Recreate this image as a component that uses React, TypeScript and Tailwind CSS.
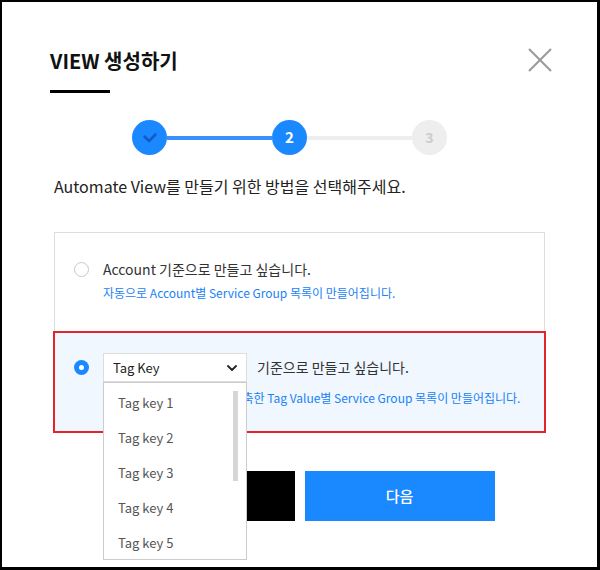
import { useState } from "react";

const font = { fontFamily: '"Noto Sans CJK KR", "Noto Sans", sans-serif' };

const tagKeys = ["Tag key 1", "Tag key 2", "Tag key 3", "Tag key 4", "Tag key 5", "Tag key 6"];

function Stepper() {
  return (
    <div className="ml-[78px] mt-[27px] flex items-center">
      <div className="w-[35px] h-[35px] rounded-full bg-[#1a88ff] flex items-center justify-center">
        <svg width="18" height="18" viewBox="0 0 18 18" fill="none">
          <path d="M3.5 7.5 L8 12 L14.5 5.5" stroke="#1559c4" strokeWidth="2.5" strokeLinecap="round" strokeLinejoin="round" />
        </svg>
      </div>
      <div className="w-[105px] h-[4px] bg-[#3b8fff]" />
      <div className="w-[35px] h-[35px] rounded-full bg-[#1a88ff] flex items-center justify-center text-white text-[15px] font-bold">
        2
      </div>
      <div className="w-[105px] h-[4px] bg-[#eeeeee]" />
      <div className="w-[35px] h-[35px] rounded-full bg-[#eeeeee] flex items-center justify-center text-[#cccccc] text-[14px] font-bold">
        3
      </div>
    </div>
  );
}

export default function App() {
  const [choice, setChoice] = useState<"account" | "tag">("tag");

  return (
    <div style={font} className="w-[600px] h-[570px] bg-white border-t-2 border-l-2 border-r-[3px] border-b-[3px] border-black relative overflow-hidden">
      <div className="pl-[52px] pr-[52px] pt-[45px]">
        <h1 className="-ml-1 text-[20px] leading-[28px] font-bold text-[#111]">VIEW 생성하기</h1>
        <div className="-ml-1 mt-[15px] w-[60px] h-[3px] bg-black" />

        <Stepper />

        <p className="mt-[19px] text-[16px] leading-[24px] text-[#222]">
          Automate View를 만들기 위한 방법을 선택해주세요.
        </p>

        <div className="mt-[34px] border border-[#dddddd]">
          <div className="flex pl-[19px] pt-[26px] pb-[29px]" onClick={() => setChoice("account")}>
            <div className="mt-[3px] w-[15px] h-[15px] rounded-full border border-[#c8c8c8] bg-white" />
            <div className="ml-[14px]">
              <div className="text-[14px] leading-[20px] text-[#333]">Account 기준으로 만들고 싶습니다.</div>
              <div className="mt-[5px] text-[12px] leading-[18px] text-[#1a82f5]">
                자동으로 Account별 Service Group 목록이 만들어집니다.
              </div>
            </div>
          </div>

          <div
            className="-mx-[2px] -mb-[1px] border-2 border-[#e3242b] bg-[#f0f7ff] pl-[19px] pt-[20px] pb-[24px]"
            onClick={() => setChoice("tag")}
          >
            <div className="flex items-center">
              <div className="w-[15px] h-[15px] rounded-full bg-[#1a88ff] flex items-center justify-center">
                {choice === "tag" && <div className="w-[5px] h-[5px] rounded-full bg-white" />}
              </div>
              <div className="relative ml-[14px]">
                <button className="w-[144px] h-[29px] bg-white border border-[#dddddd] flex items-center justify-between pl-[9px] pr-[8px] text-[13px] text-[#222]">
                  <span>Tag Key</span>
                  <svg width="12" height="12" viewBox="0 0 12 12" fill="none">
                    <path d="M2 4 L6 8 L10 4" stroke="#222" strokeWidth="1.8" strokeLinecap="round" strokeLinejoin="round" />
                  </svg>
                </button>
                <div className="absolute left-0 top-[29px] z-10 w-[144px] h-[178px] bg-white border border-[#cccccc] overflow-hidden">
                  <div className="absolute right-[8px] top-[8px] w-[5px] h-[90px] bg-[#d6d6d6]" />
                  <ul className="pt-[2px]">
                    {tagKeys.map((k) => (
                      <li key={k} className="h-[35px] flex items-center pl-[14px] text-[13px] text-[#555]">
                        {k}
                      </li>
                    ))}
                  </ul>
                </div>
              </div>
              <span className="ml-[10px] text-[14px] text-[#333]">기준으로 만들고 싶습니다.</span>
            </div>
            <div className="ml-[29px] mt-[7px] text-[12px] leading-[18px] text-[#1a82f5] whitespace-nowrap">
              자동으로 Tag Key 값으로 구축한 Tag Value별 Service Group 목록이 만들어집니다.
            </div>
          </div>
        </div>

        <div className="mt-[38px] flex justify-center gap-[10px]">
          <button className="w-[190px] h-[50px] bg-black text-white text-[15px]">이전</button>
          <button className="w-[190px] h-[50px] bg-[#1a88ff] text-white text-[15px] font-medium">다음</button>
        </div>
      </div>

      <button className="absolute left-[526px] top-[46px]" aria-label="close">
        <svg width="24" height="24" viewBox="0 0 24 24" fill="none">
          <path d="M1 1 L23 23 M23 1 L1 23" stroke="#999" strokeWidth="2" />
        </svg>
      </button>
    </div>
  );
}
